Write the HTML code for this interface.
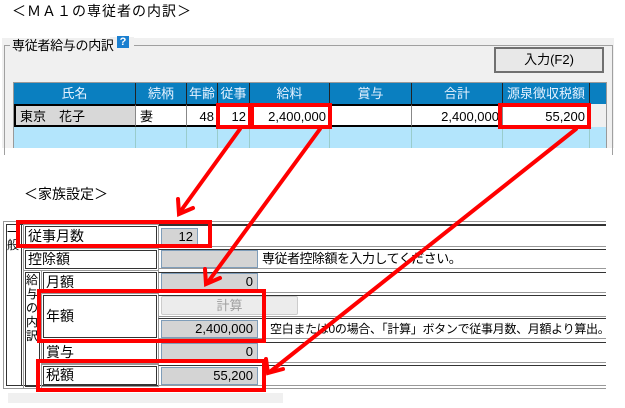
<!DOCTYPE html>
<html><head><meta charset="utf-8"><style>
*{margin:0;padding:0;box-sizing:border-box}
body{width:625px;height:408px;background:#fff;position:relative;overflow:hidden;font-family:"Liberation Sans","Noto Sans CJK JP",sans-serif;font-size:13px;color:#000}
.a{position:absolute;white-space:nowrap}
.th{position:absolute;top:83px;height:21px;background:#0a7fc0;color:#e6f2ff;border-right:1px solid #222;text-align:center;line-height:21px;font-size:13px}
.td{position:absolute;top:104px;height:23px;background:#fff;border-right:1px solid #888;line-height:21px;text-align:right;padding-right:3px;border-top:2px solid #000;border-bottom:2px solid #000}
.tb{position:absolute;top:127px;height:21px;background:#b3e5fc;border-right:1px solid #9cc}
.lab{position:absolute;border:1px solid #333;outline:1px solid #999;outline-offset:1px;padding-left:2px;font-size:14px}
.val{position:absolute;left:158px;width:448px;border-top:1px solid #333;border-bottom:1px solid #999;border-left:1px solid #999}
.inp{position:absolute;background:#d4d4d4;border:1px solid #7f9db9;text-align:right;padding-right:4px;font-size:13px}
.red{position:absolute;border:4px solid #f00}
</style></head><body>
<div class="a" style="left:12px;top:1px;font-size:14px;letter-spacing:1px">＜ＭＡ１の専従者の内訳＞</div>
<div class="a" style="left:2px;top:38px;width:612px;height:110px;background:#f0f0f0"></div>
<div class="a" style="left:4px;top:45px;width:609px;height:110px;border:1px solid #a0a0a0;border-bottom:none"></div>
<div class="a" style="left:110px;top:37px;width:24px;height:12px;background:#f0f0f0"></div>
<div class="a" style="left:10px;top:38px;background:#f0f0f0;padding:0 2px;font-size:13px;line-height:15px;letter-spacing:-0.3px">専従者給与の内訳</div>
<div class="a" style="left:117px;top:36px;width:12px;height:12px;background:#1a7fd0;color:#fff;font-weight:bold;font-size:11px;line-height:12px;text-align:center">?</div>
<div class="a" style="left:494px;top:47px;width:110px;height:26px;border:2px solid #707070;background:#e8e8e8;text-align:center;line-height:22px;font-size:13px">入力(F2)</div>
<div class="a" style="left:13px;top:82px;width:594px;height:66px;background:#f0f0f0;border:1px solid #999"></div>
<div class="a" style="left:14px;top:83px;width:592px;height:21px;background:#0a7fc0"></div>
<div class="a" style="left:14px;top:127px;width:592px;height:21px;background:#b3e5fc"></div>
<div class="th" style="left:14px;width:122px">氏名</div>
<div class="th" style="left:136px;width:51px">続柄</div>
<div class="th" style="left:187px;width:31px">年齢</div>
<div class="th" style="left:218px;width:32px">従事</div>
<div class="th" style="left:250px;width:80px">給料</div>
<div class="th" style="left:330px;width:82px">賞与</div>
<div class="th" style="left:412px;width:91px">合計</div>
<div class="th" style="left:503px;width:87px">源泉徴収税額</div>
<div class="td" style="left:14px;width:122px;background:#d8d8d8;text-align:left;padding-left:4px;border-left:2px solid #000">東京　花子</div>
<div class="td" style="left:136px;width:51px;text-align:left;padding-left:4px">妻</div>
<div class="td" style="left:187px;width:31px">48</div>
<div class="td" style="left:218px;width:32px">12</div>
<div class="td" style="left:250px;width:80px">2,400,000</div>
<div class="td" style="left:330px;width:82px"></div>
<div class="td" style="left:412px;width:91px">2,400,000</div>
<div class="td" style="left:503px;width:87px;border-right:2px solid #000">55,200</div>
<div class="tb" style="left:14px;width:122px"></div><div class="tb" style="left:136px;width:51px"></div><div class="tb" style="left:187px;width:31px"></div><div class="tb" style="left:218px;width:32px"></div><div class="tb" style="left:250px;width:80px"></div><div class="tb" style="left:330px;width:82px"></div><div class="tb" style="left:412px;width:91px"></div><div class="tb" style="left:503px;width:87px"></div>
<div class="red" style="left:216px;top:103px;width:36px;height:26px"></div>
<div class="red" style="left:250px;top:103px;width:82px;height:26px"></div>
<div class="red" style="left:498px;top:103px;width:93px;height:26px"></div>

<div class="a" style="left:24px;top:184px;font-size:14px">＜家族設定＞</div>
<div class="a" style="left:3px;top:221px;width:603px;height:168px;border-top:1px solid #999;border-bottom:1px solid #999;border-left:1px solid #999"></div>
<div class="a" style="left:6px;top:224px;width:600px;height:162px;border-top:1px solid #333;border-bottom:1px solid #333;border-left:1px solid #333"></div>
<div class="a" style="left:21px;top:224px;width:3px;height:162px;border-left:1px solid #333;border-right:1px solid #999"></div>
<div class="a" style="left:7px;top:226px;width:14px;font-size:12px;line-height:13px;white-space:normal;word-break:break-all">一般</div>
<div class="lab" style="left:25px;top:226px;width:132px;height:20px;line-height:18px">従事月数</div>
<div class="lab" style="left:25px;top:250px;width:132px;height:19px;line-height:17px">控除額</div>
<div class="lab" style="left:25px;top:272px;width:15px;height:115px;line-height:14px;white-space:normal;word-break:break-all;padding-left:0;font-size:12px">給与の内訳</div>
<div class="lab" style="left:43px;top:272px;width:114px;height:20px;line-height:18px">月額</div>
<div class="lab" style="left:43px;top:295px;width:114px;height:43px;line-height:41px">年額</div>
<div class="lab" style="left:43px;top:342px;width:114px;height:20px;line-height:18px">賞与</div>
<div class="lab" style="left:43px;top:366px;width:114px;height:19px;line-height:17px">税額</div>
<div class="val" style="top:225px;height:22px"></div>
<div class="val" style="top:249px;height:20px"></div>
<div class="val" style="top:272px;height:21px"></div>
<div class="val" style="top:295px;height:22px"></div>
<div class="val" style="top:318px;height:21px"></div>
<div class="val" style="top:342px;height:21px"></div>
<div class="val" style="top:365px;height:21px"></div>
<div class="inp" style="left:161px;top:228px;width:37px;height:17px;line-height:15px">12</div>
<div class="inp" style="left:161px;top:250px;width:97px;height:18px"></div>
<div class="a" style="left:262px;top:250px;font-size:13px;line-height:18px;letter-spacing:-0.5px">専従者控除額を入力してください。</div>
<div class="inp" style="left:161px;top:273px;width:97px;height:18px;line-height:16px">0</div>
<div class="a" style="left:161px;top:296px;width:137px;height:19px;background:#ececec;border:1px solid #ccc;border-radius:2px;color:#a0a0a0;text-align:center;line-height:17px">計算</div>
<div class="inp" style="left:161px;top:320px;width:97px;height:18px;line-height:16px">2,400,000</div>
<div class="a" style="left:270px;top:320px;font-size:12px;line-height:18px;letter-spacing:-0.3px">空白または0の場合、「計算」ボタンで従事月数、月額より算出。</div>
<div class="inp" style="left:161px;top:343px;width:97px;height:18px;line-height:16px">0</div>
<div class="inp" style="left:161px;top:367px;width:97px;height:18px;line-height:16px">55,200</div>
<div class="a" style="left:8px;top:393px;width:275px;height:10px;background:#f0f0f0"></div>
<div class="red" style="left:16px;top:220px;width:196px;height:28px"></div>
<div class="red" style="left:37px;top:289px;width:229px;height:54px"></div>
<div class="red" style="left:36px;top:359px;width:230px;height:33px"></div>
<svg class="a" style="left:0;top:0" width="625" height="408" viewBox="0 0 625 408">
<g stroke="#f00" stroke-width="4" fill="none" stroke-linecap="round">
<line x1="240" y1="129" x2="180" y2="212"/><polyline points="178,199 179,214 193,208"/>
<line x1="320" y1="129" x2="208" y2="282"/><polyline points="205,269 206,284 220,278"/>
<line x1="576" y1="129" x2="271" y2="371"/><polyline points="266,359 268,373 283,369"/>
</g></svg>
</body></html>
